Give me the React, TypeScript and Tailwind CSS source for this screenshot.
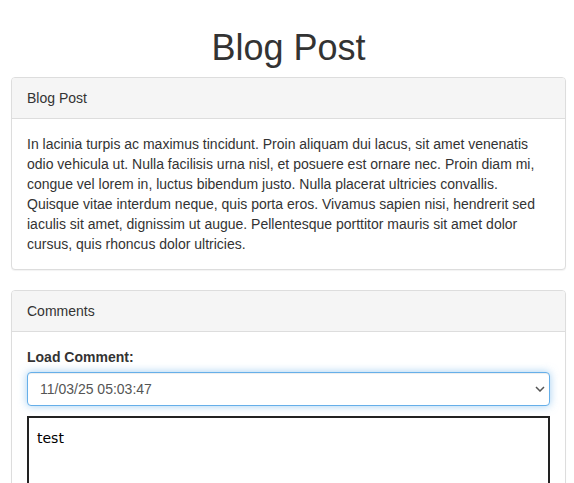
import { useState } from "react";

const postBody =
  "In lacinia turpis ac maximus tincidunt. Proin aliquam dui lacus, sit amet venenatis odio vehicula ut. Nulla facilisis urna nisl, et posuere est ornare nec. Proin diam mi, congue vel lorem in, luctus bibendum justo. Nulla placerat ultricies convallis. Quisque vitae interdum neque, quis porta eros. Vivamus sapien nisi, hendrerit sed iaculis sit amet, dignissim ut augue. Pellentesque porttitor mauris sit amet dolor cursus, quis rhoncus dolor ultricies.";

function Panel({ title, children }: { title: string; children: React.ReactNode }) {
  return (
    <div className="mb-[20px] rounded-[4px] border border-[#ddd] bg-white shadow-[0_1px_1px_rgba(0,0,0,0.05)]">
      <div className="rounded-t-[3px] border-b border-[#ddd] bg-[#f5f5f5] px-[15px] py-[10px] leading-[20px] text-[#333]">
        {title}
      </div>
      <div className="p-[15px]">{children}</div>
    </div>
  );
}

export default function App() {
  const [comment, setComment] = useState("test");

  return (
    <div className="min-h-screen bg-white pl-[11px] pr-[8px] pt-[28px] font-['Liberation_Sans',Arial,sans-serif] text-[14px] leading-[20px] text-[#333]">
      <h1 className="mb-[9px] text-center text-[36px] font-normal leading-[40px] text-[#333]">
        Blog Post
      </h1>

      <Panel title="Blog Post">
        <p>{postBody}</p>
      </Panel>

      <Panel title="Comments">
        <label className="mb-[5px] block font-bold">Load Comment:</label>
        <div className="relative mb-[10px]">
          <select
            defaultValue="1"
            className="block h-[34px] w-full appearance-none rounded-[4px] border border-[#66afe9] bg-white px-[12px] text-[14px] text-[#555] shadow-[inset_0_1px_1px_rgba(0,0,0,0.075),0_0_8px_rgba(102,175,233,0.6)] outline-none"
          >
            <option value="1">11/03/25 05:03:47</option>
          </select>
          <svg
            className="pointer-events-none absolute right-[5px] top-[14px] h-[6px] w-[10px]"
            viewBox="0 0 10 6"
            fill="none"
            stroke="#555"
            strokeWidth="1.5"
          >
            <path d="M1 1l4 4 4-4" />
          </svg>
        </div>
        <textarea
          value={comment}
          onChange={(e) => setComment(e.target.value)}
          className="block h-[140px] w-full resize-none border-2 border-[#222] pl-[8px] pt-[13px] font-['DejaVu_Sans',sans-serif] text-[14px] leading-[15px] text-black outline-none"
        />
      </Panel>
    </div>
  );
}
